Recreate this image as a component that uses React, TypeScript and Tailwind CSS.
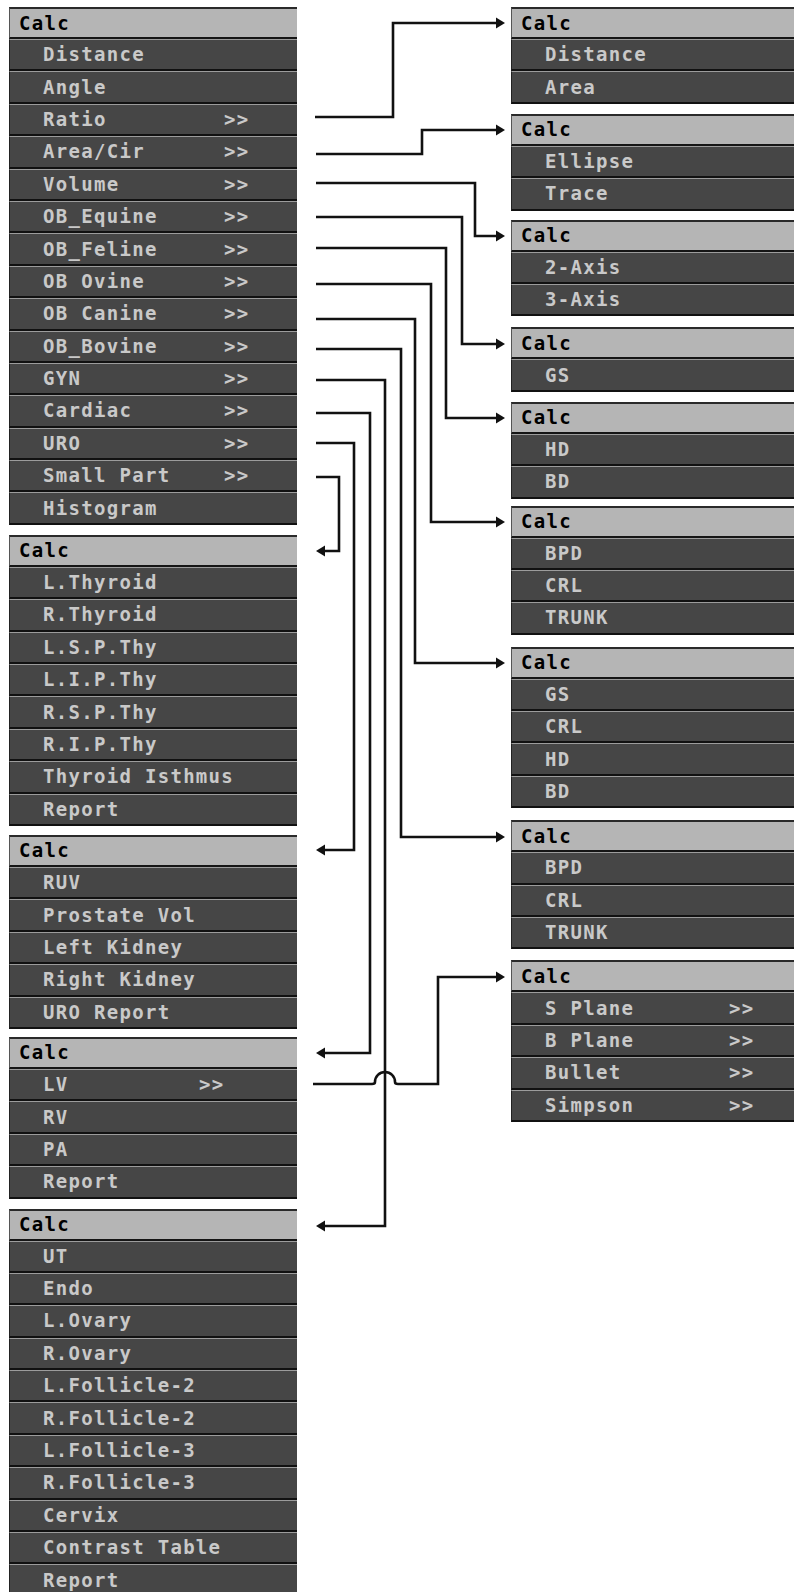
import React from 'react'

type Item = { label: string; more?: boolean }
type Group = { items: Item[]; mt: string; moreAt?: string }

const it = (label: string, more = false): Item => ({ label, more })

// left stack of menus
const leftGroups: Group[] = [
  {
    mt: 'mt-[7px]',
    moreAt: 'w-[181px]',
    items: [
      it('Distance'),
      it('Angle'),
      it('Ratio', true),
      it('Area/Cir', true),
      it('Volume', true),
      it('OB_Equine', true),
      it('OB_Feline', true),
      it('OB Ovine', true),
      it('OB Canine', true),
      it('OB_Bovine', true),
      it('GYN', true),
      it('Cardiac', true),
      it('URO', true),
      it('Small Part', true),
      it('Histogram'),
    ],
  },
  {
    mt: 'mt-[10px]',
    items: [
      it('L.Thyroid'),
      it('R.Thyroid'),
      it('L.S.P.Thy'),
      it('L.I.P.Thy'),
      it('R.S.P.Thy'),
      it('R.I.P.Thy'),
      it('Thyroid Isthmus'),
      it('Report'),
    ],
  },
  {
    mt: 'mt-[9px]',
    items: [it('RUV'), it('Prostate Vol'), it('Left Kidney'), it('Right Kidney'), it('URO Report')],
  },
  {
    mt: 'mt-[8px]',
    moreAt: 'w-[156px]',
    items: [it('LV', true), it('RV'), it('PA'), it('Report')],
  },
  {
    mt: 'mt-[10px]',
    items: [
      it('UT'),
      it('Endo'),
      it('L.Ovary'),
      it('R.Ovary'),
      it('L.Follicle-2'),
      it('R.Follicle-2'),
      it('L.Follicle-3'),
      it('R.Follicle-3'),
      it('Cervix'),
      it('Contrast Table'),
      it('Report'),
    ],
  },
]

// right stack of sub menus, spaced to meet the arrows
const rightGroups: Group[] = [
  { mt: 'mt-[7px]', items: [it('Distance'), it('Area')] },
  { mt: 'mt-[10px]', items: [it('Ellipse'), it('Trace')] },
  { mt: 'mt-[9px]', items: [it('2-Axis'), it('3-Axis')] },
  { mt: 'mt-[11px]', items: [it('GS')] },
  { mt: 'mt-[10px]', items: [it('HD'), it('BD')] },
  { mt: 'mt-[7px]', items: [it('BPD'), it('CRL'), it('TRUNK')] },
  { mt: 'mt-[12px]', items: [it('GS'), it('CRL'), it('HD'), it('BD')] },
  { mt: 'mt-[12px]', items: [it('BPD'), it('CRL'), it('TRUNK')] },
  {
    mt: 'mt-[11px]',
    moreAt: 'w-[184px]',
    items: [it('S Plane', true), it('B Plane', true), it('Bullet', true), it('Simpson', true)],
  },
]

function Menu({ group }: { group: Group }) {
  return (
    <div className={`${group.mt} flex flex-col`}>
      <div className="h-8 flex items-center pl-[9px] bg-[#b5b5b5] border-t-2 border-t-[#2a2a2a] border-l border-l-[#555] border-b-2 border-b-[#151515] text-black">
        Calc
      </div>
      {group.items.map((item, i) => (
        <div
          key={i}
          className="h-[32.4px] flex items-center pl-[33px] bg-[#464646] border-t border-t-[#9c9c9c] border-l border-l-[#222] border-b-2 border-b-[#111] text-[#c9c9c9]"
        >
          <span className={`whitespace-pre ${group.moreAt ?? ''}`}>{item.label}</span>
          {item.more && <span>&gt;&gt;</span>}
        </div>
      ))}
    </div>
  )
}

function RightArrow({ y }: { y: number }) {
  return <polygon points={`505,${y} 496,${y - 5.5} 496,${y + 5.5}`} fill="#111" />
}

function LeftArrow({ y }: { y: number }) {
  return <polygon points={`316,${y} 325,${y - 5.5} 325,${y + 5.5}`} fill="#111" />
}

function Connectors() {
  const paths = [
    'M315 117 H393 V23 H497',
    'M316 154 H422 V130 H497',
    'M316 183 H475 V236 H497',
    'M316 217 H462 V344 H497',
    'M316 248 H446 V418 H497',
    'M316 284 H431 V522 H497',
    'M316 319 H415 V663 H497',
    'M316 349 H401 V837 H497',
    'M316 380 H385 V1226 H324',
    'M316 413 H370 V1053 H324',
    'M316 443 H354 V850 H324',
    'M316 477 H339 V551 H324',
    'M313 1084 H372 Q375 1084 375 1082 A10 10 0 0 1 395 1082 Q395 1084 398 1084 H438 V977 H497',
  ]
  return (
    <svg className="absolute inset-0 pointer-events-none" width="794" height="1592">
      {paths.map((d, i) => (
        <path key={i} d={d} fill="none" stroke="#111" strokeWidth="2.6" />
      ))}
      {[23, 130, 236, 344, 418, 522, 663, 837, 977].map((y) => (
        <RightArrow key={y} y={y} />
      ))}
      {[551, 850, 1053, 1226].map((y) => (
        <LeftArrow key={y} y={y} />
      ))}
    </svg>
  )
}

export default function App() {
  return (
    <div
      className="relative w-[794px] h-[1592px] bg-white overflow-hidden flex text-[19px] font-bold tracking-[1.3px] leading-none"
      style={{ fontFamily: '"DejaVu Sans Mono", "Liberation Mono", monospace' }}
    >
      <div className="ml-[9px] w-[288px] flex flex-col">
        {leftGroups.map((g, i) => (
          <Menu key={i} group={g} />
        ))}
      </div>
      <div className="ml-[214px] flex-1 flex flex-col">
        {rightGroups.map((g, i) => (
          <Menu key={i} group={g} />
        ))}
      </div>
      <Connectors />
    </div>
  )
}
